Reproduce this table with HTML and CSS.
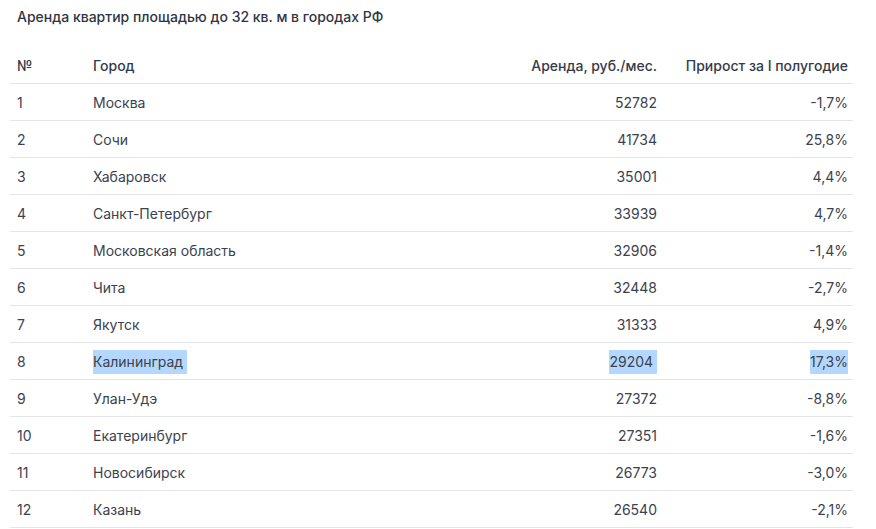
FILE: index.html
```html
<!DOCTYPE html>
<html lang="ru">
<head>
<meta charset="utf-8">
<title>Аренда квартир</title>
<link rel="stylesheet" href="styles.css">
</head>
<body>
<div class="page">
  <h1 class="title">Аренда квартир площадью до 32 кв. м в городах РФ</h1>
  <table class="tbl">
    <colgroup>
      <col class="c-num"><col class="c-city"><col class="c-rent"><col class="c-grow">
    </colgroup>
    <thead>
      <tr><th class="num">№</th><th>Город</th><th class="r">Аренда, руб./мес.</th><th class="r">Прирост за I полугодие</th></tr>
    </thead>
    <tbody>
      <tr><td>1</td><td>Москва</td><td class="r">52782</td><td class="r">-1,7%</td></tr>
      <tr><td>2</td><td>Сочи</td><td class="r">41734</td><td class="r">25,8%</td></tr>
      <tr><td>3</td><td>Хабаровск</td><td class="r">35001</td><td class="r">4,4%</td></tr>
      <tr><td>4</td><td>Санкт-Петербург</td><td class="r">33939</td><td class="r">4,7%</td></tr>
      <tr><td>5</td><td>Московская область</td><td class="r">32906</td><td class="r">-1,4%</td></tr>
      <tr><td>6</td><td>Чита</td><td class="r">32448</td><td class="r">-2,7%</td></tr>
      <tr><td>7</td><td>Якутск</td><td class="r">31333</td><td class="r">4,9%</td></tr>
      <tr><td>8</td><td><span class="sel">Калининград&nbsp;</span></td><td class="r"><span class="sel">29204&nbsp;</span></td><td class="r"><span class="sel">17,3%</span></td></tr>
      <tr><td>9</td><td>Улан-Удэ</td><td class="r">27372</td><td class="r">-8,8%</td></tr>
      <tr><td>10</td><td>Екатеринбург</td><td class="r">27351</td><td class="r">-1,6%</td></tr>
      <tr><td>11</td><td>Новосибирск</td><td class="r">26773</td><td class="r">-3,0%</td></tr>
      <tr><td>12</td><td>Казань</td><td class="r">26540</td><td class="r">-2,1%</td></tr>
    </tbody>
  </table>
</div>
</body>
</html>
```
FILE: styles.css
```css
* { box-sizing: border-box; }
html, body { margin: 0; padding: 0; background: #ffffff; }
body {
  font-family: Inter, "Noto Sans", "DejaVu Sans", sans-serif;
  font-size: 14px;
  color: #3b424f;
}
.page { padding: 7px 23px 0 10px; }
.title {
  margin: 0 0 0 7px;
  font-size: 14px;
  font-weight: 500;
  line-height: 20px;
  color: #2e3542;
}
.tbl {
  margin-top: 19px;
  width: 843px;
  border-collapse: collapse;
  table-layout: fixed;
}
.c-num { width: 76px; }
.c-city { width: 360px; }
.c-rent { width: 218px; }
.c-grow { width: 189px; }
.tbl th, .tbl td {
  height: 37px;
  padding: 2px 5px 0 7px;
  text-align: left;
  font-weight: 400;
  border-bottom: 1px solid #e3e5e8;
  white-space: nowrap;
  vertical-align: middle;
}
.tbl th { font-weight: 500; color: #343b48; }
.tbl .r { text-align: right; }
.tbl td:nth-child(3), .tbl th:nth-child(3) { padding-right: 7px; }
.sel { background: #b3d7fe; padding: 3px 0 4px; }
```
